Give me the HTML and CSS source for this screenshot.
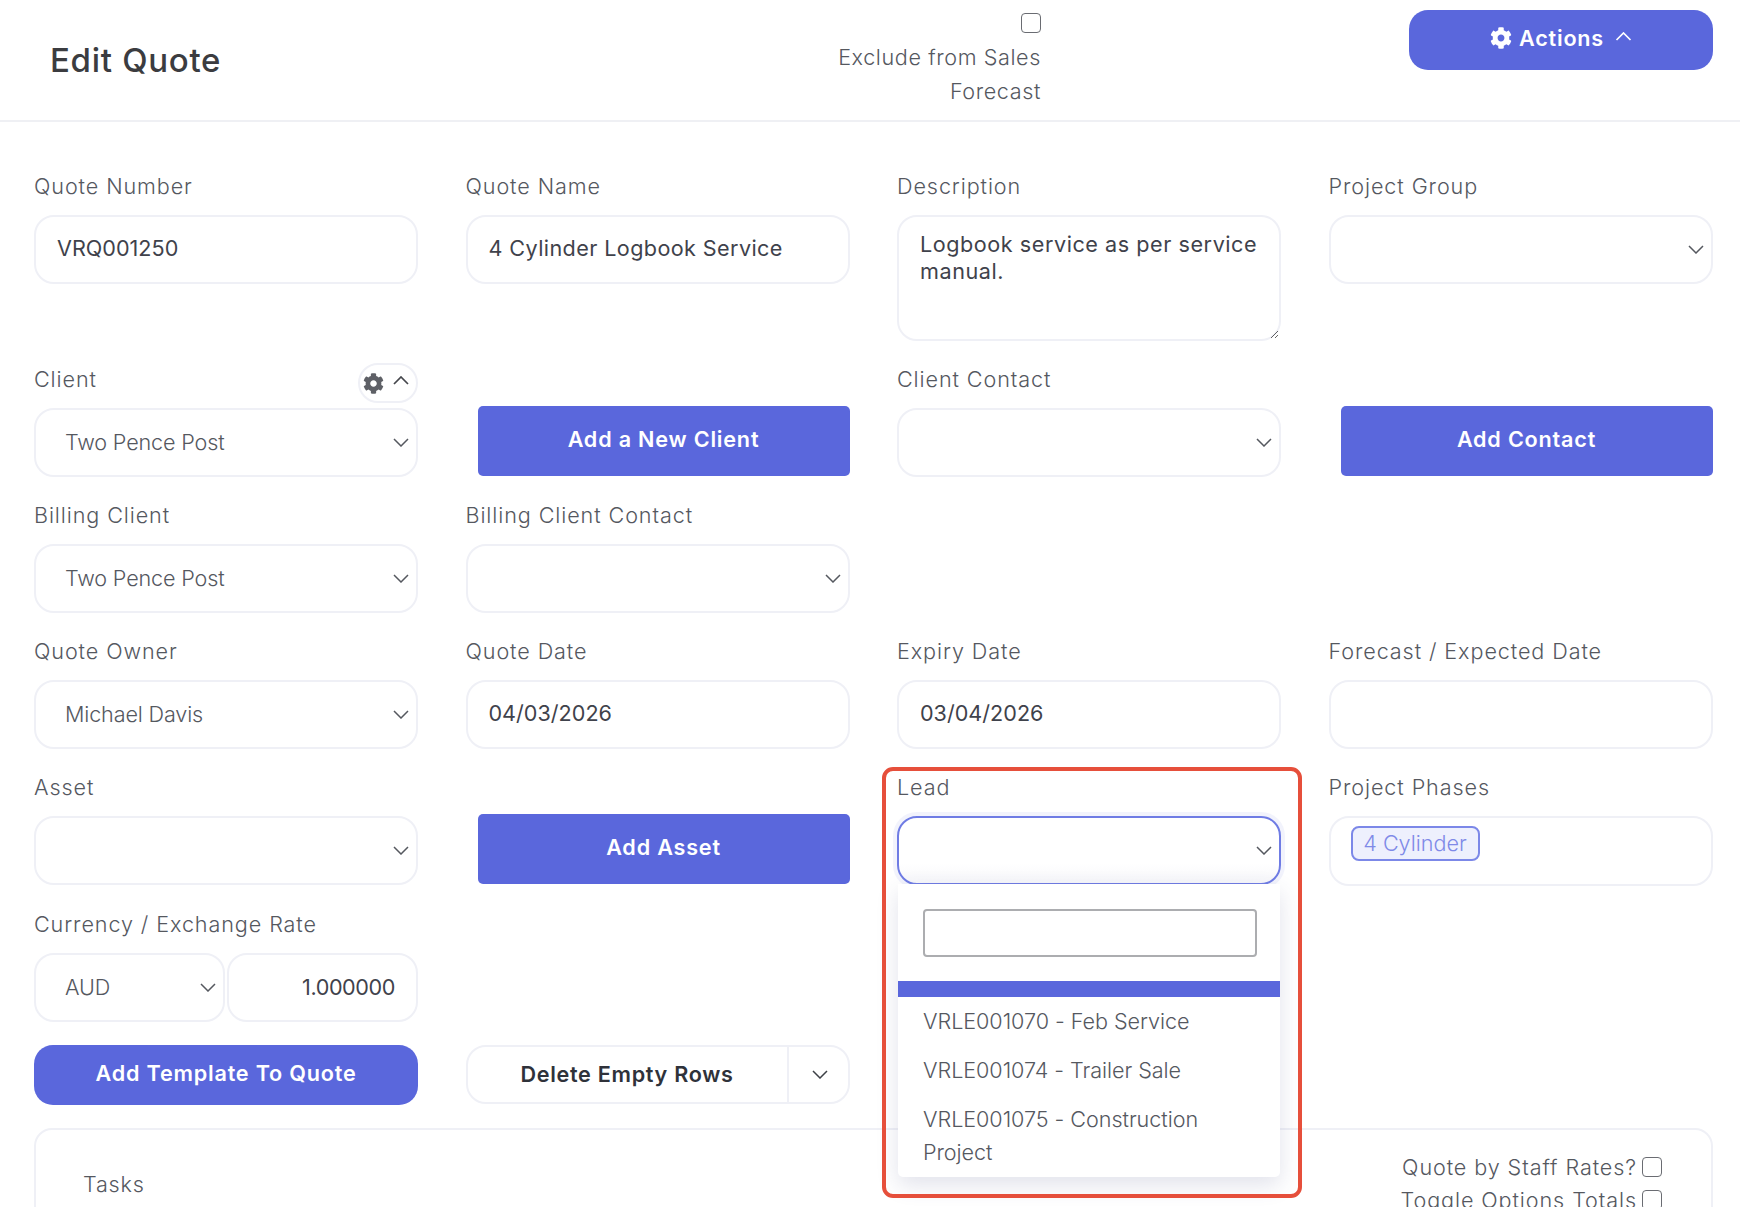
FILE: index.html
```html
<!DOCTYPE html>
<html lang="en">
<head>
<meta charset="utf-8">
<title>Edit Quote</title>
<link rel="stylesheet" href="styles.css">
</head>
<body>
<svg class="defs" aria-hidden="true">
  <symbol id="gear" viewBox="0 0 512 512"><path fill="currentColor" d="M487.4 315.7l-42.6-24.6c4.3-23.2 4.3-47 0-70.2l42.6-24.6c4.9-2.8 7.1-8.6 5.5-14-11.1-35.6-30-67.8-54.7-94.6-3.8-4.1-10-5.1-14.8-2.3L380.8 110c-17.9-15.4-38.5-27.3-60.8-35.1V25.8c0-5.6-3.9-10.5-9.4-11.7-36.7-8.2-74.3-7.8-109.2 0-5.5 1.2-9.4 6.1-9.4 11.7V75c-22.2 7.9-42.8 19.8-60.8 35.1L88.7 85.5c-4.9-2.8-11-1.9-14.8 2.3-24.7 26.7-43.6 58.9-54.7 94.6-1.7 5.4.6 11.2 5.5 14L67.3 221c-4.3 23.2-4.3 47 0 70.2l-42.6 24.6c-4.9 2.8-7.1 8.6-5.5 14 11.1 35.6 30 67.8 54.7 94.6 3.8 4.1 10 5.1 14.8 2.3l42.6-24.6c17.9 15.4 38.5 27.3 60.8 35.1v49.2c0 5.6 3.9 10.5 9.4 11.7 36.7 8.2 74.3 7.8 109.2 0 5.5-1.2 9.4-6.1 9.4-11.7v-49.2c22.2-7.9 42.8-19.8 60.8-35.1l42.6 24.6c4.9 2.8 11 1.9 14.8-2.3 24.7-26.7 43.6-58.9 54.7-94.6 1.5-5.5-.7-11.3-5.6-14.1zM256 336c-44.1 0-80-35.9-80-80s35.9-80 80-80 80 35.9 80 80-35.9 80-80 80z"/></symbol>
  <symbol id="chev-down" viewBox="0 0 16 9"><path fill="none" stroke="currentColor" stroke-width="1.5" d="M1 1l7 7 7-7"/></symbol>
  <symbol id="chev-up" viewBox="0 0 16 9"><path fill="none" stroke="currentColor" stroke-width="1.7" d="M1 8l7-7 7 7"/></symbol>
</svg>

<header class="page-head">
  <h1 class="page-title">Edit Quote</h1>
  <label class="exclude">
    <input class="check" type="checkbox">
    <span class="exclude-text">Exclude from Sales Forecast</span>
  </label>
  <button class="btn actions" type="button">
    <svg class="gear-lg"><use href="#gear"/></svg>
    <span>Actions</span>
    <svg class="chev-up"><use href="#chev-up"/></svg>
  </button>
</header>

<main class="form">
  <div class="field">
    <label class="label">Quote Number</label>
    <input class="control num" type="text" value="VRQ001250">
  </div>
  <div class="field">
    <label class="label">Quote Name</label>
    <input class="control" type="text" value="4 Cylinder Logbook Service">
  </div>
  <div class="field">
    <label class="label">Description</label>
    <textarea class="control area">Logbook service as per service manual.</textarea>
  </div>
  <div class="field">
    <label class="label">Project Group</label>
    <div class="select"><span class="select-value"></span><svg class="chev"><use href="#chev-down"/></svg></div>
  </div>

  <div class="field">
    <div class="label-row">
      <label class="label">Client</label>
      <div class="pill">
        <svg class="gear-sm"><use href="#gear"/></svg>
        <svg class="chev-up dark"><use href="#chev-up"/></svg>
      </div>
    </div>
    <div class="select"><span class="select-value">Two Pence Post</span><svg class="chev"><use href="#chev-down"/></svg></div>
  </div>
  <button class="btn side" type="button">Add a New Client</button>
  <div class="field">
    <label class="label">Client Contact</label>
    <div class="select"><span class="select-value"></span><svg class="chev"><use href="#chev-down"/></svg></div>
  </div>
  <button class="btn side" type="button">Add Contact</button>

  <div class="field">
    <label class="label">Billing Client</label>
    <div class="select"><span class="select-value">Two Pence Post</span><svg class="chev"><use href="#chev-down"/></svg></div>
  </div>
  <div class="field">
    <label class="label">Billing Client Contact</label>
    <div class="select"><span class="select-value"></span><svg class="chev"><use href="#chev-down"/></svg></div>
  </div>
  <div class="filler span2"></div>

  <div class="field">
    <label class="label">Quote Owner</label>
    <div class="select"><span class="select-value">Michael Davis</span><svg class="chev"><use href="#chev-down"/></svg></div>
  </div>
  <div class="field">
    <label class="label">Quote Date</label>
    <input class="control num" type="text" value="04/03/2026">
  </div>
  <div class="field">
    <label class="label">Expiry Date</label>
    <input class="control num" type="text" value="03/04/2026">
  </div>
  <div class="field">
    <label class="label">Forecast / Expected Date</label>
    <input class="control" type="text" value="">
  </div>

  <div class="field">
    <label class="label">Asset</label>
    <div class="select"><span class="select-value"></span><svg class="chev"><use href="#chev-down"/></svg></div>
  </div>
  <button class="btn side" type="button">Add Asset</button>
  <div class="field lead">
    <label class="label">Lead</label>
    <div class="select focused"><span class="select-value"></span><svg class="chev"><use href="#chev-down"/></svg></div>
    <div class="dropdown">
      <div class="search-wrap"><input class="search" type="text"></div>
      <div class="option-active"></div>
      <div class="option">VRLE001070 - Feb Service</div>
      <div class="option">VRLE001074 - Trailer Sale</div>
      <div class="option">VRLE001075 - Construction Project</div>
    </div>
    <div class="highlight"></div>
  </div>
  <div class="field">
    <label class="label">Project Phases</label>
    <div class="tags"><span class="tag">4 Cylinder</span></div>
  </div>

  <div class="field">
    <label class="label">Currency / Exchange Rate</label>
    <div class="pair">
      <div class="select"><span class="select-value">AUD</span><svg class="chev"><use href="#chev-down"/></svg></div>
      <input class="control rate" type="text" value="1.000000">
    </div>
  </div>
  <div class="filler span3"></div>

  <button class="btn template" type="button">Add Template To Quote</button>
  <div class="split">
    <button class="split-main" type="button">Delete Empty Rows</button>
    <button class="split-caret" type="button" aria-label="More"><svg class="chev static"><use href="#chev-down"/></svg></button>
  </div>
</main>

<section class="card">
  <h2 class="card-title">Tasks</h2>
  <div class="toggles">
    <label class="toggle">Quote by Staff Rates?<input class="check" type="checkbox"></label>
    <label class="toggle">Toggle Options Totals<input class="check" type="checkbox"></label>
  </div>
</section>
</body>
</html>
```
FILE: styles.css
```css
* { box-sizing: border-box; }
html, body { margin: 0; height: 100%; overflow: hidden; background: #fff; }
body {
  font-family: Inter, "Open Sans", sans-serif;
  font-size: 21.6px;
  font-weight: 300;
  letter-spacing: .6px;
  color: #55585f;
}
.defs { display: none; }

.page-head {
  display: flex;
  align-items: flex-start;
  height: 122px;
  padding: 10px 27px 0 50px;
  border-bottom: 2px solid #eff0f4;
}
.page-title {
  flex: 1;
  margin: 22px 0 0;
  font-size: 33px;
  font-weight: 500;
  letter-spacing: .7px;
  line-height: 56px;
  color: #3b3c40;
}
.exclude {
  display: flex;
  flex-direction: column;
  align-items: flex-end;
  gap: 8px;
  width: 225px;
  margin-top: 3px;
  text-align: right;
  line-height: 33.5px;
}
.check {
  appearance: none;
  flex: none;
  width: 20px;
  height: 20px;
  margin: 0;
  border: 1.5px solid #6a6c72;
  border-radius: 4px;
  background: #fff;
}
.btn {
  border: 0;
  background: #5a67dc;
  color: #fff;
  font: inherit;
  font-weight: 600;
  letter-spacing: .8px;
  padding: 0 0 4px;
}
.actions {
  display: flex;
  align-items: center;
  justify-content: center;
  gap: 7px;
  width: 304px;
  height: 60px;
  margin-left: 368px;
  border-radius: 19px;
}
.gear-lg { width: 22px; height: 22px; color: #fff; }
.chev-up { width: 17px; height: 9px; margin: 0 0 4px 4px; color: #fff; }

.form {
  display: grid;
  grid-template-columns: repeat(4, 384px);
  column-gap: 47.5px;
  row-gap: 23px;
  padding: 49px 0 0 34px;
  align-items: start;
}
.field { position: relative; min-width: 0; }
.label { display: block; height: 44px; line-height: 30px; letter-spacing: .9px; }
.label-row { position: relative; height: 44px; }
.pill {
  position: absolute;
  top: -1px;
  right: 0;
  display: flex;
  align-items: center;
  gap: 9px;
  width: 60px;
  height: 40px;
  padding: 0 3px;
  border: 2px solid #eff0f6;
  border-radius: 20px;
  background: #fff;
}
.gear-sm { width: 21px; height: 21px; color: #5e6066; flex: none; }
.chev-up.dark { margin: 0 0 6px; color: #45474c; width: 16px; flex: none; }

.control {
  display: block;
  width: 100%;
  height: 69px;
  padding: 0 21px 3px;
  border: 2px solid #eff0f6;
  border-radius: 20px;
  background: #fff;
  font: inherit;
  font-weight: 400;
  letter-spacing: .4px;
  color: #3f424b;
  outline: none;
}
.num { letter-spacing: 0; }
.area {
  height: 126px;
  padding: 14px 4px 0 21px;
  line-height: 27px;
  resize: vertical;
  letter-spacing: .55px;
}
.select {
  position: relative;
  display: flex;
  align-items: center;
  height: 69px;
  padding: 0 29px 2px;
  border: 2px solid #eff0f6;
  border-radius: 20px;
  background: #fff;
  color: #55585f;
  letter-spacing: -.15px;
  white-space: nowrap;
}
.chev {
  position: absolute;
  top: 28px;
  right: 7px;
  width: 16px;
  height: 9px;
  color: #55585f;
}
.focused {
  border-color: #6f7ce4;
  box-shadow: 0 0 0 4px rgba(90, 103, 220, .08);
  background: linear-gradient(#fff 70%, #f7f7fa);
}
.side { height: 70px; margin: 42px 0 0 12px; border-radius: 5px; }
.span2 { grid-column: span 2; }
.span3 { grid-column: span 3; }

.dropdown {
  position: absolute;
  top: 112px;
  left: 1px;
  right: 1px;
  z-index: 2;
  background: #fff;
  border-radius: 0 0 5px 5px;
  box-shadow: 0 8px 22px rgba(70, 75, 130, .16);
  color: #55585f;
}
.search-wrap { padding: 25px 23px 24px 25px; }
.search {
  display: block;
  width: 100%;
  height: 48px;
  border: 2px solid #acadb0;
  border-radius: 4px;
  background: #fff;
  outline: none;
}
.option-active { height: 16px; background: #5a67dc; }
.option { padding: 8px 25px; line-height: 33px; letter-spacing: -.05px; }
.highlight {
  position: absolute;
  top: -5px;
  left: -15px;
  right: -21px;
  height: 431px;
  z-index: 3;
  border: 4px solid #e64f3b;
  border-radius: 11px;
  pointer-events: none;
}
.tags {
  height: 70px;
  padding: 8px 20px;
  border: 2px solid #eff0f6;
  border-radius: 20px;
  background: #fff;
}
.tag {
  display: inline-block;
  width: 129px;
  height: 35px;
  border: 2px solid #7c88e8;
  border-radius: 8px;
  background: #eef0fd;
  color: #7f8ae8;
  line-height: 30px;
  letter-spacing: 0;
  text-align: center;
  white-space: nowrap;
}
.pair { display: grid; grid-template-columns: 191px 191px; gap: 2px; }
.rate { text-align: right; padding: 0 21px 2px; letter-spacing: -.4px; }
.template { height: 60px; border-radius: 19px; }
.split {
  display: flex;
  height: 59px;
  border: 2px solid #eff0f6;
  border-radius: 20px;
  background: #fff;
}
.split-main, .split-caret {
  border: 0;
  background: none;
  font: inherit;
  letter-spacing: .7px;
  color: #2f323a;
  padding: 0 0 2px;
}
.split-main { width: 321px; font-weight: 600; border-right: 2px solid #eff0f6; }
.split-caret { position: relative; flex: 1; }
.chev.static { top: 23px; right: 20px; color: #3d4046; }

.card {
  display: flex;
  justify-content: space-between;
  height: 200px;
  margin: 23px 27px 0 34px;
  padding: 20px 49px 0 47px;
  border: 2px solid #eff0f6;
  border-radius: 18px;
}
.card-title {
  margin: 18px 0 0;
  font: inherit;
  line-height: 33px;
  letter-spacing: .8px;
}
.toggle {
  display: flex;
  align-items: center;
  justify-content: flex-end;
  gap: 5px;
  height: 33px;
  letter-spacing: .9px;
  white-space: nowrap;
}
```
